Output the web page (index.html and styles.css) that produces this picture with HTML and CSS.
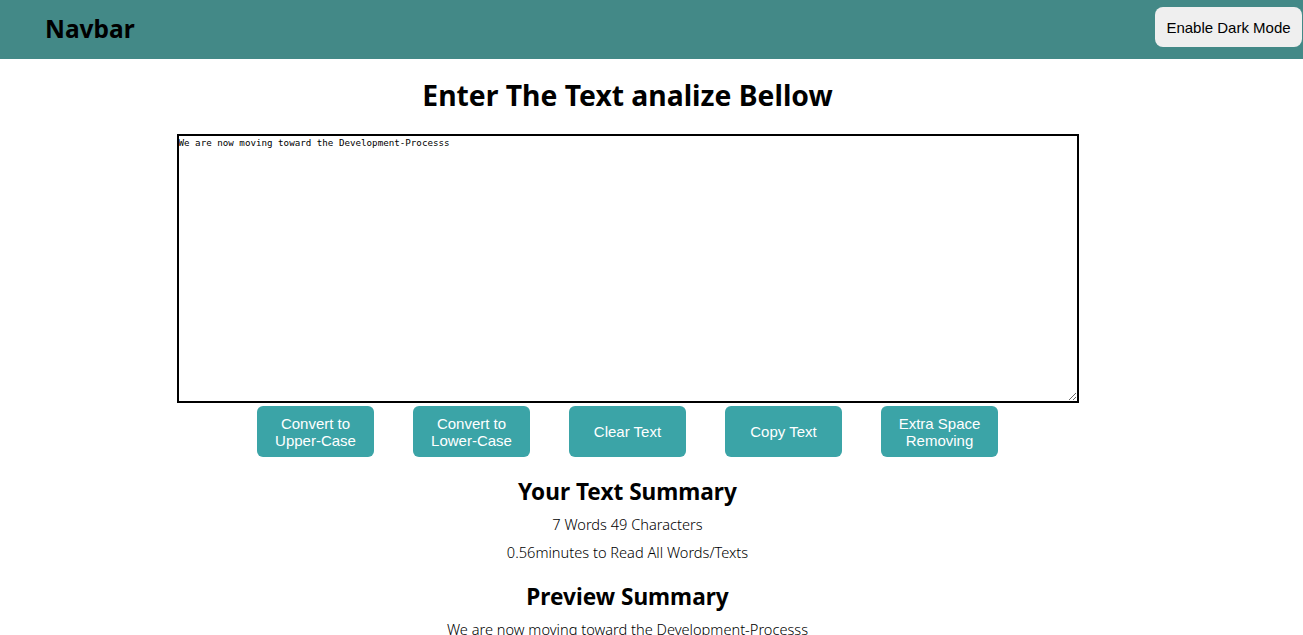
FILE: index.html
```html
<!DOCTYPE html>
<html>
<head>
<meta charset="utf-8">
<link rel="stylesheet" href="styles.css">
</head>
<body>
<nav class="navbar">
  <span class="brand">Navbar</span>
  <button class="mode-btn">Enable Dark Mode</button>
</nav>
<main class="main">
  <h1 class="title">Enter The Text analize Bellow</h1>
  <textarea class="editor" spellcheck="false">We are now moving toward the Development-Processs</textarea>
  <div class="actions">
    <button class="act">Convert to<br>Upper-Case</button>
    <button class="act">Convert to<br>Lower-Case</button>
    <button class="act">Clear Text</button>
    <button class="act">Copy Text</button>
    <button class="act">Extra Space<br>Removing</button>
  </div>
  <h2 class="sub">Your Text Summary</h2>
  <p class="info">7 Words 49 Characters</p>
  <p class="info">0.56minutes to Read All Words/Texts</p>
  <h2 class="sub sub2">Preview Summary</h2>
  <p class="info">We are now moving toward the Development-Processs</p>
</main>
</body>
</html>
```
FILE: styles.css
```css
html, body {
  margin: 0;
  padding: 0;
  background: #fff;
  overflow: hidden;
}
body {
  font-family: "Noto Sans", "Open Sans", sans-serif;
  color: #000;
}
.navbar {
  height: 59px;
  background: #438987;
  display: flex;
  align-items: flex-start;
  justify-content: space-between;
  padding: 0 1px 0 45px;
}
.brand {
  font-size: 24.5px;
  font-weight: 700;
  line-height: 58px;
}
.mode-btn {
  margin-top: 7px;
  width: 147px;
  height: 40px;
  border: none;
  border-radius: 8px;
  background: #efefef;
  font-family: "Liberation Sans", Arial, sans-serif;
  font-size: 15px;
  color: #000;
  padding: 0;
}
.main {
  width: 1255px;
  display: flex;
  flex-direction: column;
  align-items: center;
  text-align: center;
}
.title {
  margin: 17px 0 0;
  font-size: 28.3px;
  font-weight: 700;
  line-height: 38px;
}
.editor {
  margin-top: 20px;
  width: 902px;
  height: 269px;
  box-sizing: border-box;
  border: 2px solid #000;
  padding: 1px 0;
  resize: both;
  font-family: "DejaVu Sans Mono", monospace;
  font-size: 9.2px;
  line-height: 12px;
  color: #000;
  outline: none;
}
.actions {
  display: flex;
  gap: 39px;
  margin-top: 3px;
}
.act {
  width: 117px;
  height: 51px;
  border: none;
  border-radius: 6px;
  background: #3ba4a7;
  color: #fff;
  font-family: "Liberation Sans", Arial, sans-serif;
  font-size: 15px;
  line-height: 17px;
  padding: 0;
}
.sub {
  margin: 20px 0 0;
  font-size: 22.6px;
  font-weight: 700;
  line-height: 30px;
}
.sub2 {
  margin-top: 18px;
}
.info {
  margin: 4px 0 0;
  font-size: 14.6px;
  font-weight: 300;
  line-height: 24px;
}
.sub + .info {
  margin-top: 5px;
}
```
